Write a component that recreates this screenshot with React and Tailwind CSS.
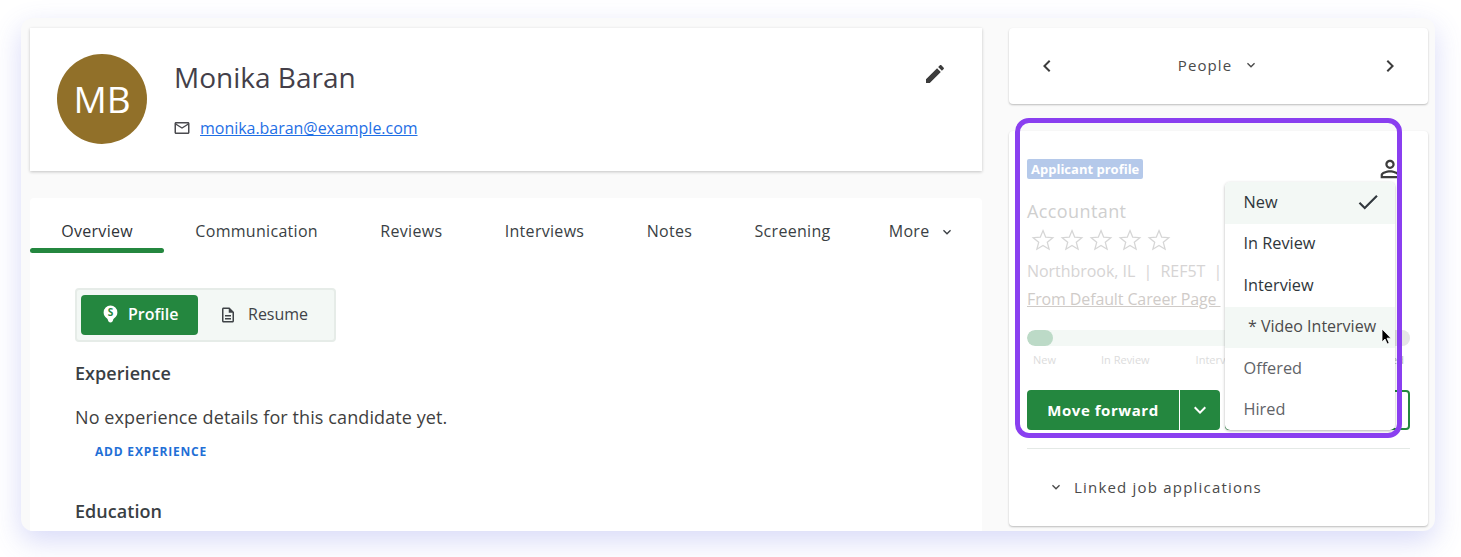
const P = {
  edit: "M3 17.25V21h3.75L17.81 9.94l-3.75-3.75L3 17.25zM20.71 7.04c.39-.39.39-1.02 0-1.41l-2.34-2.34c-.39-.39-1.02-.39-1.41 0l-1.83 1.83 3.75 3.75 1.83-1.83z",
  person: "M12 5.9c1.16 0 2.1.94 2.1 2.1s-.94 2.1-2.1 2.1S9.9 9.16 9.9 8s.94-2.1 2.1-2.1m0 9c2.97 0 6.1 1.46 6.1 2.1v1.1H5.9V17c0-.64 3.13-2.1 6.1-2.1M12 4C9.79 4 8 5.79 8 8s1.79 4 4 4 4-1.79 4-4-1.79-4-4-4zm0 9c-2.67 0-8 1.34-8 4v3h16v-3c0-2.66-5.33-4-8-4z",
  mail: "M22 6c0-1.1-.9-2-2-2H4c-1.1 0-2 .9-2 2v12c0 1.1.9 2 2 2h16c1.1 0 2-.9 2-2V6zm-2 0l-8 5-8-5h16zm0 12H4V8l8 5 8-5v10z",
  doc: "M8 16h8v2H8zm0-4h8v2H8zm6-10H6c-1.1 0-2 .9-2 2v16c0 1.1.89 2 1.99 2H18c1.1 0 2-.9 2-2V8l-6-6zm4 18H6V4h7v5h5v11z",
  check: "M9 16.17L4.83 12l-1.42 1.41L9 19 21 7l-1.41-1.41z",
  down: "M16.59 8.59L12 13.17 7.41 8.59 6 10l6 6 6-6z",
  left: "M15.41 7.41L14 6l-6 6 6 6 1.41-1.41L10.83 12z",
  right: "M10 6L8.59 7.41 13.17 12l-4.58 4.59L10 18l6-6z",
};

function Icon({ d, className }) {
  return (
    <svg viewBox="0 0 24 24" fill="currentColor" className={className}>
      <path d={d} />
    </svg>
  );
}

function Star() {
  return (
    <svg viewBox="0 0 24 24" fill="none" stroke="#d6d6d6" strokeWidth="1.3" className="w-[24px] h-[24px] mr-[5px]">
      <polygon points="12,2.6 14.7,9.2 21.8,9.7 16.3,14.3 18.1,21.2 12,17.4 5.9,21.2 7.7,14.3 2.2,9.7 9.3,9.2" />
    </svg>
  );
}

const tabs = ["Overview", "Communication", "Reviews", "Interviews", "Notes", "Screening"];

function MenuItem({ children, active, hover, faded }) {
  return (
    <div className={`h-[41.5px] flex items-center justify-between pr-[14px] ${hover ? "pl-[23px]" : "pl-[18.5px]"} ${active || hover ? "bg-[#f3f8f5]" : ""} ${hover ? "text-[#4a4a4a] font-normal text-[16px]" : faded ? "text-[#5f6368] font-medium" : "text-[#2f363b] font-medium"} pb-[2px]`}>
      {children}
    </div>
  );
}

export default function App() {
  return (
    <div className="h-[557px] w-[1461px] bg-white pt-[18px] pl-[21px] overflow-hidden font-['Open_Sans',sans-serif]">
      <div className="w-[1414px] h-[513px] bg-[#fafafa] rounded-[12px] shadow-[0_10px_28px_rgba(90,100,225,0.24)] overflow-hidden flex pt-[10px] pl-[9px] gap-[27px]">
        {/* left column */}
        <div className="w-[952px] flex flex-col gap-[27px] shrink-0">
          <div className="h-[143px] bg-white shadow-[0_1px_3px_rgba(0,0,0,0.22)] flex pl-[27px] pt-[26px] relative shrink-0">
            <div className="w-[90px] h-[90px] rounded-full bg-[#917029] text-white text-[37px] flex items-center justify-center">MB</div>
            <div className="ml-[27px]">
              <div className="text-[28px] leading-[36px] font-medium text-[#443f49] mt-[5px]">Monika Baran</div>
              <div className="flex items-center mt-[21px] h-[24px]">
                <Icon d={P.mail} className="w-[18px] h-[18px] text-[#4a4a4f] -ml-[1px]" />
                <a className="ml-[9px] text-[16px] tracking-[-0.03px] text-[#1f6fe5] underline">monika.baran@example.com</a>
              </div>
            </div>
            <Icon d={P.edit} className="absolute right-[35px] top-[34px] w-[24px] h-[24px] text-[#3c3c3c]" />
          </div>

          <div className="flex-1 bg-white rounded-t-[4px]">
            <div className="flex h-[55px] text-[16px] font-medium tracking-[0.3px] text-[#3a3f44]">
              {tabs.map((t, i) => (
                <div key={t} className={`px-[31.2px] h-[55px] pt-[21px] leading-[24px] relative ${i === 0 ? "text-[#2f3338]" : ""}`}>
                  {t}
                  {i === 0 && <div className="absolute left-0 right-0 top-[50px] h-[5px] rounded-[3px] bg-[#24873f]" />}
                </div>
              ))}
              <div className="pl-[27px] pt-[21px] leading-[24px] flex items-start">
                More
                <Icon d={P.down} className="w-[16px] h-[16px] ml-[10px] mt-[5px]" />
              </div>
            </div>

            <div className="px-[45px] pt-[35px]">
              <div className="w-[261px] h-[54px] rounded-[4px] border-2 border-[#e6ece8] bg-[#f3f8f5] flex items-center pl-[4px]">
                <div className="w-[117px] h-[40px] rounded-[4px] bg-[#24873f] text-white font-semibold text-[16px] flex items-center pl-[22px] pb-[2px]">
                  <svg viewBox="0 0 14 17" className="w-[15px] h-[18px] mr-[10px]">
                    <path fill="#fff" d="M7 0.500a6.500 6.500 0 0 0-6.500 6.500c0 2.600 1.500 4.300 3 5.400.7.500.8 1 1.100 1.900.3.900.9 2.200 2.400 2.200s2.100-1.300 2.400-2.200c.3-.9.400-1.400 1.100-1.900 1.500-1.100 3-2.800 3-5.400A6.500 6.500 0 0 0 7 0.500z" />
                    <text x="7" y="10.500" textAnchor="middle" fontSize="9.500" fontWeight="700" fill="#24873f">S</text>
                  </svg>
                  Profile
                </div>
                <div className="flex items-center text-[16px] font-medium text-[#3f4347] ml-[21px] pb-[2px]">
                  <Icon d={P.doc} className="w-[18px] h-[18px] mr-[11px] mt-[2px]" />
                  Resume
                </div>
              </div>
              <div className="text-[18px] leading-[24px] font-semibold text-[#3a3f44] mt-[19px] tracking-[0.05px]">Experience</div>
              <div className="text-[18px] leading-[24px] text-[#3f3f3f] mt-[20px] tracking-[0.1px]">No experience details for this candidate yet.</div>
              <div className="text-[12px] leading-[16px] font-bold tracking-[0.8px] text-[#1f6fd6] ml-[20px] mt-[15px]">ADD EXPERIENCE</div>
              <div className="text-[18px] leading-[24px] font-semibold text-[#3a3f44] mt-[39px] tracking-[0.05px]">Education</div>
            </div>
          </div>
        </div>

        {/* right column */}
        <div className="w-[419px] flex flex-col gap-[27px] shrink-0 relative">
          <div className="h-[76px] shrink-0 bg-white rounded-[4px] shadow-[0_1px_2px_rgba(0,0,0,0.25)] flex items-center justify-between px-[26px] text-[#3d3d3d]">
            <Icon d={P.left} className="w-[24px] h-[24px]" />
            <div className="flex items-center text-[15px] tracking-[1.1px] font-medium text-[#4a4a4a] pb-[2px]">
              People
              <Icon d={P.down} className="w-[16px] h-[16px] ml-[11px]" />
            </div>
            <Icon d={P.right} className="w-[24px] h-[24px]" />
          </div>

          <div className="h-[395px] shrink-0 bg-white rounded-[4px] shadow-[0_1px_2px_rgba(0,0,0,0.25)] px-[18px] pt-[28px] relative">
            <div className="flex items-center justify-between h-[20px]">
              <span className="h-[20px] px-[4px] rounded-[2px] bg-[#b5c9ea] text-white font-bold text-[13px] leading-[20px]">Applicant profile</span>
              <Icon d={P.person} className="w-[28px] h-[28px] text-[#3d3d3d] mr-[6px] shrink-0" />
            </div>
            <div className="text-[18px] leading-[24px] font-medium text-[#cfcfcf] mt-[20px] tracking-[0.4px]">Accountant</div>
            <div className="flex ml-[4px] mt-[5px]">
              <Star /><Star /><Star /><Star /><Star />
            </div>
            <div className="text-[16px] leading-[24px] text-[#d6d4d4] mt-[7px] whitespace-pre tracking-[-0.04px]">Northbrook, IL  |  REF5T  |</div>
            <div className="text-[16px] leading-[24px] text-[#cfcbc8] underline mt-[4px] whitespace-pre tracking-[-0.12px]">From Default Career Page </div>

            <div className="h-[16px] rounded-[8px] bg-[#f3f8f5] mt-[19px] relative overflow-hidden">
              <div className="w-[26px] h-[16px] rounded-[8px] bg-[#bcdac7]" />
              <div className="absolute right-0 top-0 w-[60px] h-[16px] bg-[#e6e6e6]" />
            </div>
            <div className="flex text-[11px] leading-[16px] text-[#dcdcdc] mt-[6px] pl-[6px] relative">
              <span>New</span>
              <span className="ml-[45px]">In Review</span>
              <span className="ml-[46px]">Interview</span>
              <span className="absolute right-[6px] text-[#b5b5b5]">Hired</span>
            </div>

            <div className="flex h-[40px] mt-[22px]">
              <div className="w-[152px] h-[40px] rounded-l-[4px] bg-[#24873f] text-white font-bold text-[15px] tracking-[0.55px] flex items-center justify-center">Move forward</div>
              <div className="w-[40px] h-[40px] ml-[1px] rounded-r-[4px] bg-[#24873f] text-white flex items-center justify-center">
                <Icon d={P.down} className="w-[24px] h-[24px]" />
              </div>
              <div className="flex-1 ml-[5px] h-[40px] rounded-[4px] border-2 border-[#24873f]" />
            </div>

            <div className="h-px bg-[#e4e9e6] mt-[18px]" />
            <div className="flex items-center mt-[26px] pl-[21px] text-[15px] leading-[24px] font-medium tracking-[1.2px] text-[#4a4a4a]">
              <Icon d={P.down} className="w-[16px] h-[16px] mr-[10px]" />
              Linked job applications
            </div>

            {/* status dropdown */}
            <div className="absolute left-[216px] top-[51px] w-[170px] h-[248px] bg-white rounded-[5px] shadow-[0_1px_3px_rgba(0,0,0,0.3)] overflow-hidden text-[16.3px]">
              <MenuItem active>
                New
                <Icon d={P.check} className="w-[26px] h-[26px] text-[#333a3f]" />
              </MenuItem>
              <MenuItem>In Review</MenuItem>
              <MenuItem>Interview</MenuItem>
              <MenuItem hover>* Video Interview</MenuItem>
              <MenuItem faded>Offered</MenuItem>
              <MenuItem faded>Hired</MenuItem>
            </div>
          </div>

          {/* purple highlight */}
          <div className="absolute left-[6px] top-[90px] w-[387px] h-[320px] rounded-[14px] border-[5px] border-[#8a3ff0] pointer-events-none" />

          {/* cursor */}
          <svg viewBox="0 0 12 18" className="absolute left-[372px] top-[300px] w-[12px] h-[18px]">
            <path d="M1 1v13l3-3 2.200 5 2-1-2.200-4.800H10z" fill="#000" stroke="#fff" strokeWidth="0.8" />
          </svg>
        </div>
      </div>
    </div>
  );
}
